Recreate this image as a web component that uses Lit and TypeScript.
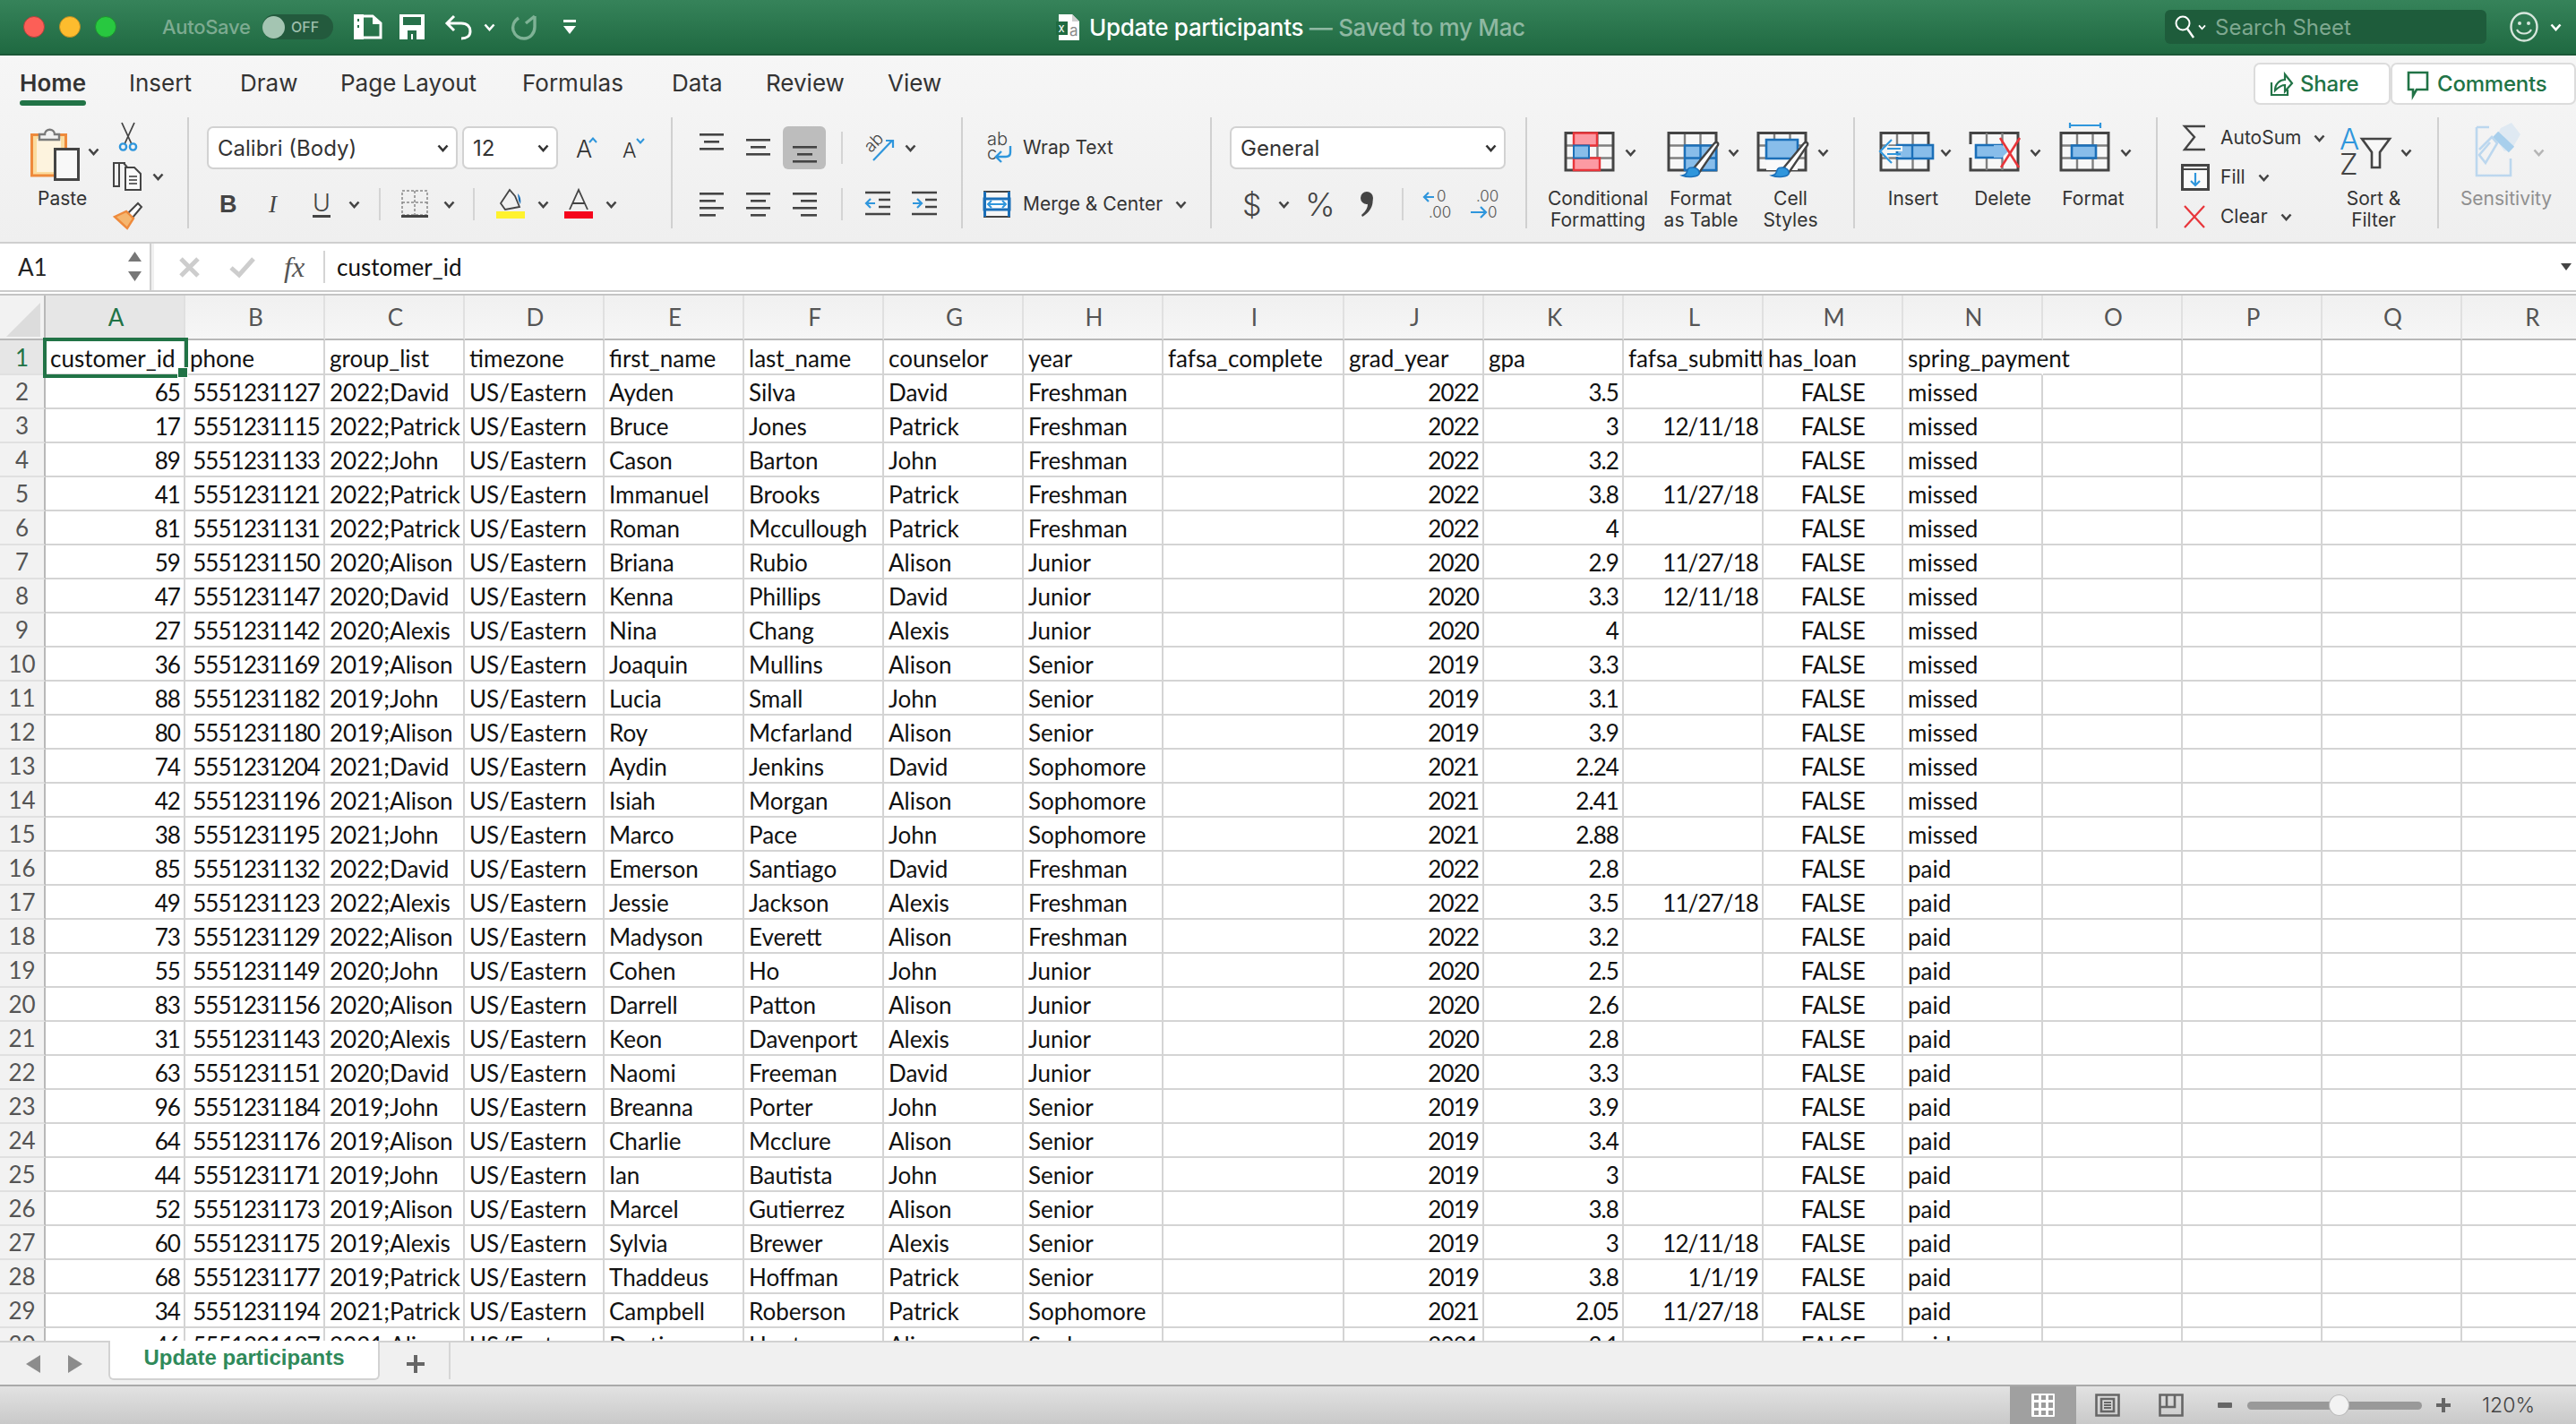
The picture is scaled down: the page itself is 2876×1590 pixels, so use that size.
import { LitElement, html, svg, css, nothing } from "lit";
import { customElement } from "lit/decorators.js";

const COLS = ["A", "B", "C", "D", "E", "F", "G", "H", "I", "J", "K", "L", "M", "N", "O", "P", "Q", "R"];
const HEAD = ["customer_id", "phone", "group_list", "timezone", "first_name", "last_name", "counselor", "year", "fafsa_complete", "grad_year", "gpa", "fafsa_submitted", "has_loan", "spring_payment"];

// id|phone suffix|group|first|last|counselor|year|grad|gpa|submitted|payment
const DATA = `65|1127|2022;David|Ayden|Silva|David|Freshman|2022|3.5||missed
17|1115|2022;Patrick|Bruce|Jones|Patrick|Freshman|2022|3|12/11/18|missed
89|1133|2022;John|Cason|Barton|John|Freshman|2022|3.2||missed
41|1121|2022;Patrick|Immanuel|Brooks|Patrick|Freshman|2022|3.8|11/27/18|missed
81|1131|2022;Patrick|Roman|Mccullough|Patrick|Freshman|2022|4||missed
59|1150|2020;Alison|Briana|Rubio|Alison|Junior|2020|2.9|11/27/18|missed
47|1147|2020;David|Kenna|Phillips|David|Junior|2020|3.3|12/11/18|missed
27|1142|2020;Alexis|Nina|Chang|Alexis|Junior|2020|4||missed
36|1169|2019;Alison|Joaquin|Mullins|Alison|Senior|2019|3.3||missed
88|1182|2019;John|Lucia|Small|John|Senior|2019|3.1||missed
80|1180|2019;Alison|Roy|Mcfarland|Alison|Senior|2019|3.9||missed
74|1204|2021;David|Aydin|Jenkins|David|Sophomore|2021|2.24||missed
42|1196|2021;Alison|Isiah|Morgan|Alison|Sophomore|2021|2.41||missed
38|1195|2021;John|Marco|Pace|John|Sophomore|2021|2.88||missed
85|1132|2022;David|Emerson|Santiago|David|Freshman|2022|2.8||paid
49|1123|2022;Alexis|Jessie|Jackson|Alexis|Freshman|2022|3.5|11/27/18|paid
73|1129|2022;Alison|Madyson|Everett|Alison|Freshman|2022|3.2||paid
55|1149|2020;John|Cohen|Ho|John|Junior|2020|2.5||paid
83|1156|2020;Alison|Darrell|Patton|Alison|Junior|2020|2.6||paid
31|1143|2020;Alexis|Keon|Davenport|Alexis|Junior|2020|2.8||paid
63|1151|2020;David|Naomi|Freeman|David|Junior|2020|3.3||paid
96|1184|2019;John|Breanna|Porter|John|Senior|2019|3.9||paid
64|1176|2019;Alison|Charlie|Mcclure|Alison|Senior|2019|3.4||paid
44|1171|2019;John|Ian|Bautista|John|Senior|2019|3||paid
52|1173|2019;Alison|Marcel|Gutierrez|Alison|Senior|2019|3.8||paid
60|1175|2019;Alexis|Sylvia|Brewer|Alexis|Senior|2019|3|12/11/18|paid
68|1177|2019;Patrick|Thaddeus|Hoffman|Patrick|Senior|2019|3.8|1/1/19|paid
34|1194|2021;Patrick|Campbell|Roberson|Patrick|Sophomore|2021|2.05|11/27/18|paid
46|1197|2021;Alison|Dustin|Hunt|Alison|Sophomore|2021|3.1||paid`
    .split("\n")
    .map((l) => l.split("|"));

const DARK = "#444";
const BLUE = "#1b6fb8";
const SKY = "#2f96dc";
const FILL = "#88bdea";
const RED = "#e8353a";

const chev = (color = DARK) => html`<svg class="chev" width="13" height="9" viewBox="0 0 13 9">
    <path d="M1.5 1.5 6.5 7 11.5 1.5" fill="none" stroke=${color} stroke-width="2.6" />
</svg>`;

const lines = (w: number, ys: number[], xs: number[][], color = DARK) => html`<svg width=${w} height="48" viewBox="0 0 ${w} 48">
    ${ys.map((y, i) => svg`<rect x=${xs[i][0]} y=${y} width=${xs[i][1]} height="2.6" fill=${color} />`)}
</svg>`;

// small sheet used by the big cell-style buttons
const sheetGrid = svg`
    <path d="M2 11.5H55V53H2Z" fill="#f7f7f7" />
    <path d="M2 25.5H55M2 39.5H55M20 11.5V53M37.5 11.5V53" stroke="#808080" stroke-width="2.4" fill="none" />
    <path d="M2 11.5H55V53H2Z" fill="none" stroke=${DARK} stroke-width="3" />
`;

const brush = svg`
    <path d="M29 52 53 23c2-2 5-1 4 2L36 56z" fill="#fff" stroke=${DARK} stroke-width="2.4" />
    <path d="M29 50c4 0 8 3 7 7-1 3-11 5-19 2 5-1 5-3 6-6s3-3 6-3z" fill=${SKY} stroke=${BLUE} stroke-width="1.6" />
`;

const tableIcon = (body: unknown) => html`<svg width="62" height="60" viewBox="0 0 62 60">${sheetGrid}${body}</svg>`;

@customElement("app-root")
export class AppRoot extends LitElement {
    private _titleBar() {
        return html`<div class="titlebar">
            <span class="light red"></span><span class="light amber"></span><span class="light green"></span>
            <span class="autosave">AutoSave</span>
            <span class="toggle"><i></i><b>OFF</b></span>
            <svg width="32" height="28" viewBox="0 0 32 28">
                <path d="M2 2H21L30 10V26H2Z" fill="none" stroke="#fff" stroke-width="3" />
                <path d="M0 0H11V28H0ZM21 2V11H30" fill="#fff" />
                <path d="M5 5V8M5 12V15" stroke="#2a7049" stroke-width="2" />
            </svg>
            <svg width="28" height="28" viewBox="0 0 28 28">
                <path d="M0 0H28V28H0Z" fill="#fff" />
                <path d="M4 3H24V12H4ZM9 28V18H19V28H15V22H13V28Z" fill="#27704a" />
            </svg>
            <svg width="32" height="28" viewBox="0 0 32 28">
                <path d="M11 2 3 10l8 8M3 10H19C26 10 29 14 29 19S25 27 19 27" fill="none" stroke="#fff" stroke-width="3" />
            </svg>
            ${chev("#fff")}
            <svg width="30" height="30" viewBox="0 0 30 30">
                <path d="M8 5C2 9 1 15 2 19c2 6 7 9 12 9 7 0 12-6 12-13V3M26 3 16 11" fill="none" stroke="#7fb296" stroke-width="3.4" />
            </svg>
            <svg width="14" height="16" viewBox="0 0 14 16">
                <rect y="0" width="14" height="3" fill="#fff" /><path d="M0 7H14L7 16Z" fill="#fff" />
            </svg>
            <svg width="27" height="29" viewBox="0 0 27 29">
                <path d="M3 0H18L26 8V29H3Z" fill="#fff" />
                <path d="M18 0V8H26" fill="#cfcfcf" />
                <rect x="0" y="8" width="13" height="15" fill="#1f6a41" />
                <text x="2.5" y="20" class="doc-x">x</text><text x="15" y="24" class="doc-a">a</text>
            </svg>
            <span class="doc-title">Update participants <span class="saved">— Saved to my Mac</span></span>
            <div class="search">
                <svg width="22" height="26" viewBox="0 0 22 26">
                    <circle cx="9" cy="9" r="7.5" fill="none" stroke="#fff" stroke-width="2" />
                    <path d="M14 15 21 25" stroke="#fff" stroke-width="2.4" />
                </svg>
                ${chev("#fff")}
                <span>Search Sheet</span>
            </div>
            <svg width="32" height="34" viewBox="0 0 32 34">
                <ellipse cx="16" cy="17" rx="14.5" ry="15.5" fill="none" stroke="#d6e6dc" stroke-width="2.4" />
                <circle cx="11" cy="13" r="2" fill="#d6e6dc" /><circle cx="21" cy="13" r="2" fill="#d6e6dc" />
                <path d="M8 20c3 6 13 6 16 0" fill="none" stroke="#d6e6dc" stroke-width="2.2" />
            </svg>
            ${chev("#fff")}
        </div>`;
    }

    private _tabs() {
        const tabs = ["Home", "Insert", "Draw", "Page Layout", "Formulas", "Data", "Review", "View"];
        return html`<div class="tabs">
            ${tabs.map((t, i) => html`<div class="tab ${i === 0 ? "on" : ""}">${t}</div>`)}
            <button class="action">
                <svg width="26" height="28" viewBox="0 0 26 28">
                    <path d="M2 12V26H20V20M6 21c0-8 6-12 11-12V3l8 10-8 9v-7c-4 0-7 2-11 6z" fill="none" stroke="#217346" stroke-width="2.2" />
                </svg>
                Share
            </button>
            <button class="action">
                <svg width="26" height="30" viewBox="0 0 26 30">
                    <path d="M2 2H23V21H11L7 28V21H2Z" fill="none" stroke="#217346" stroke-width="2.6" />
                </svg>
                Comments
            </button>
        </div>`;
    }

    private _clipboard() {
        return html`<div class="group g-clip">
            <div class="paste">
                <div class="paste-top">
                    <svg width="55" height="60" viewBox="0 0 55 60">
                        <path d="M1.5 8.5H39.500V54H1.500Z" fill="#fbdc9f" stroke="#ee8a3c" stroke-width="3" />
                        <path d="M7 13H34V50H7Z" fill="#fdf3de" />
                        <path d="M10 14V8H16C16 1 27 1 27 8H32V14Z" fill="#f2f2f2" stroke="#7a7a7a" stroke-width="2.4" />
                        <rect x="27.500" y="24.500" width="26" height="34" fill="#f8f8f8" stroke=${DARK} stroke-width="3" />
                    </svg>
                    ${chev()}
                </div>
                <div class="label">Paste</div>
            </div>
            <div class="clip-tools">
                <div class="tool-scissors">
                    <svg width="22" height="32" viewBox="0 0 22 32">
                        <path d="M4 0 15 24M18 0 7 24" stroke=${DARK} stroke-width="1.8" fill="none" />
                        <circle cx="5.500" cy="27" r="3.600" fill="none" stroke=${SKY} stroke-width="2.4" />
                        <circle cx="16.500" cy="27" r="3.600" fill="none" stroke=${SKY} stroke-width="2.4" />
                    </svg>
                </div>
                <div class="tool-copy">
                    <svg width="32" height="32" viewBox="0 0 32 32">
                        <path d="M14 1H7V27H1V1H12L18 8" fill="none" stroke=${DARK} stroke-width="2" />
                        <path d="M14 6H24L31 13V31H14Z" fill="#fafafa" stroke=${DARK} stroke-width="2" />
                        <path d="M18 16H27M18 20H27M18 24H27" stroke="#666" stroke-width="1.800" />
                    </svg>
                    ${chev()}
                </div>
                <div class="tool-brush">
                    <svg width="32" height="30" viewBox="0 0 32 30">
                        <path d="M16 12 27 1l4 4-10 12z" fill="#fff" stroke=${DARK} stroke-width="2" />
                        <path d="M1 16 14 10 22 18 15 29Z" fill="#f5b66f" stroke="#ee8a3c" stroke-width="2.4" />
                    </svg>
                </div>
            </div>
        </div>`;
    }

    private _font() {
        return html`<div class="group g-font stack">
            <div class="row r-font1">
                <div class="select sel-font"><span>Calibri (Body)</span>${chev("#333")}</div>
                <div class="select sel-size"><span>12</span>${chev("#333")}</div>
                <svg width="26" height="24" viewBox="0 0 26 24">
                    <text x="0" y="23" class="ribbon-a">A</text>
                    <path d="M15 6 19 1.500 23 6" fill="none" stroke=${SKY} stroke-width="2" />
                </svg>
                <svg width="26" height="24" viewBox="0 0 26 24">
                    <text x="0" y="23" class="ribbon-a small">A</text>
                    <path d="M16 2 20 6.500 24 2" fill="none" stroke=${SKY} stroke-width="2" />
                </svg>
            </div>
            <div class="row r-font2">
                <span class="b">B</span>
                <span class="i">I</span>
                <span class="u">U</span>
                ${chev()}
                <span class="vsep"></span>
                <svg width="30" height="32" viewBox="0 0 30 32">
                    <path d="M1 1H29V28H1ZM15 1V28M1 14H29" fill="none" stroke="#888" stroke-width="1.500" stroke-dasharray="3 2" />
                    <rect x="0" y="28" width="30" height="3" fill=${DARK} />
                </svg>
                ${chev()}
                <span class="vsep"></span>
                <svg width="32" height="34" viewBox="0 0 32 34">
                    <path d="M5 16 15 1 21 8 26 20 10 23Z" fill="none" stroke="#444" stroke-width="1.800" />
                    <path d="M24 5c3 3 4 7 3 12l-2-4z" fill=${BLUE} />
                    <rect x="0" y="25" width="32" height="8" fill="#fff22e" />
                </svg>
                ${chev()}
                <svg width="32" height="34" viewBox="0 0 32 34">
                    <path d="M6 23 16 1 26 23M9 16H23" fill="none" stroke="#444" stroke-width="1.800" />
                    <rect x="0" y="25" width="32" height="8" fill="#f5051c" />
                </svg>
                ${chev()}
            </div>
        </div>`;
    }

    private _align() {
        const x3 = [[0, 27], [5, 17], [0, 27]];
        return html`<div class="group g-align stack">
            <div class="row r-align1">
                ${lines(27, [8, 16, 24], x3)}
                ${lines(27, [14, 22, 30], x3)}
                <div class="pressed">${lines(27, [22, 30, 38], x3)}</div>
                <span class="vsep"></span>
                <svg width="34" height="32" viewBox="0 0 34 32">
                    <text x="0" y="17" class="orient">ab</text>
                    <path d="M10 30 31 8M24 8H32V16" fill="none" stroke=${SKY} stroke-width="2.200" />
                </svg>
                ${chev()}
            </div>
            <div class="row r-align2">
                ${lines(27, [11, 19, 27, 35], [[0, 27], [0, 18], [0, 27], [0, 18]])}
                ${lines(27, [11, 19, 27, 35], [[0, 27], [5, 17], [0, 27], [5, 17]])}
                ${lines(27, [11, 19, 27, 35], [[0, 27], [9, 18], [0, 27], [9, 18]])}
                <span class="vsep"></span>
                <svg width="28" height="48" viewBox="0 0 28 48">
                    <path d="M0 11H28M15 19H28M15 27H28M0 35H28" stroke=${DARK} stroke-width="2.600" />
                    <path d="M11 23H1M6 18 1 23l5 5" fill="none" stroke=${SKY} stroke-width="2.200" />
                </svg>
                <svg width="28" height="48" viewBox="0 0 28 48">
                    <path d="M0 11H28M15 19H28M15 27H28M0 35H28" stroke=${DARK} stroke-width="2.600" />
                    <path d="M1 23H11M6 18l5 5-5 5" fill="none" stroke=${SKY} stroke-width="2.200" />
                </svg>
            </div>
        </div>`;
    }

    private _wrap() {
        return html`<div class="group g-wrap stack">
            <div class="row r-wrap1">
                <svg width="30" height="32" viewBox="0 0 30 32">
                    <text x="0" y="13" class="wrap-t">ab</text><text x="0" y="29" class="wrap-t">c</text>
                    <path d="M26 14V21c0 3-2 5-5 5H11M16 20l-6 6 6 6" fill="none" stroke=${SKY} stroke-width="2.400" />
                </svg>
                <span class="label">Wrap Text</span>
            </div>
            <div class="row r-wrap2">
                <svg width="30" height="30" viewBox="0 0 30 30">
                    <path d="M1 1H29V29H1ZM1 9H29M1 21H29" fill="#f7f7f7" stroke=${DARK} stroke-width="2" />
                    <path d="M1 9H29V21H1Z" fill="#fff" stroke=${BLUE} stroke-width="3" />
                    <path d="M1.500 1V29M28.500 1V29" stroke=${BLUE} stroke-width="3" />
                    <path d="M5 15H25M9 11 5 15l4 4M21 11l4 4-4 4" fill="none" stroke=${SKY} stroke-width="2" />
                </svg>
                <span class="label">Merge &amp; Center</span>
                ${chev()}
            </div>
        </div>`;
    }

    private _number() {
        return html`<div class="group g-num stack">
            <div class="row r-num1">
                <div class="select sel-num"><span>General</span>${chev("#333")}</div>
            </div>
            <div class="row r-num2">
                <span class="sym dollar">$</span>
                ${chev()}
                <span class="sym pct">%</span>
                <svg width="18" height="28" viewBox="0 0 18 28">
                    <circle cx="9" cy="7" r="7" fill=${DARK} />
                    <path d="M11 3C18 5 18 20 4 28L3 26C10 20 11 14 9 12Z" fill=${DARK} />
                </svg>
                <span class="vsep"></span>
                <svg width="32" height="32" viewBox="0 0 32 32">
                    <text x="15" y="13" class="dec">0</text><text x="6" y="31" class="dec">.00</text>
                    <path d="M12 8H1M6 3 1 8l5 5" fill="none" stroke=${SKY} stroke-width="2.200" />
                </svg>
                <svg width="32" height="32" viewBox="0 0 32 32">
                    <text x="6" y="13" class="dec">.00</text><text x="19" y="31" class="dec">0</text>
                    <path d="M0 25H16M11 19l6 6-6 6" fill="none" stroke=${SKY} stroke-width="2.200" />
                </svg>
            </div>
        </div>`;
    }

    private _big(icon: unknown, l1: string, l2?: string, muted = false) {
        return html`<div class="big ${muted ? "muted" : ""}">
            <div class="big-top">${icon}${chev(muted ? "#b5b5b5" : DARK)}</div>
            <div class="label">${l1}${l2 ? html`<br />${l2}` : nothing}</div>
        </div>`;
    }

    private _styles() {
        const cond = tableIcon(svg`
            <path d="M11 11.500H37V25.500H11ZM11 39.500H40V53H11Z" fill="#fc9aa3" stroke=${RED} stroke-width="2.400" />
            <rect x="11" y="25.500" width="17" height="14" fill=${FILL} stroke=${BLUE} stroke-width="2" />
        `);
        const asTable = tableIcon(svg`
            <path d="M20 25.500H55V53H20Z" fill=${FILL} stroke=${BLUE} stroke-width="2.400" />
            <path d="M37.500 25.500V53M20 39.500H55" stroke=${BLUE} stroke-width="2.400" />
            ${brush}
        `);
        const cell = tableIcon(svg`
            <rect x="11" y="19" width="35" height="34" fill="#fafafa" />
            <path d="M11 19H46V40H11Z" fill=${FILL} stroke=${BLUE} stroke-width="2.600" />
            ${brush}
        `);
        return html`<div class="group g-styles big-row">
            ${this._big(cond, "Conditional", "Formatting")}
            ${this._big(asTable, "Format", "as Table")}
            ${this._big(cell, "Cell", "Styles")}
        </div>`;
    }

    private _cells() {
        const insert = tableIcon(svg`
            <path d="M20 25H60V40H20Z" fill=${FILL} stroke=${BLUE} stroke-width="2.600" />
            <path d="M37 25V40" stroke=${BLUE} stroke-width="2.400" />
            <path d="M2 32H26V26H10L14 18 0 32 14 46 10 38H26Z" fill="#f4f4f4" />
            <path d="M24 29H9M24 35H9M14 19 1 32l13 13" fill="none" stroke=${SKY} stroke-width="2.200" />
        `);
        const del = html`<svg width="62" height="60" viewBox="0 0 62 60">
            <path d="M2 24V11.500H55V53H2V39" fill="#f7f7f7" stroke=${DARK} stroke-width="3" />
            <path d="M20 11.500V24M37.500 11.500V24M20 40V53M37.500 40V53" stroke="#808080" stroke-width="2.400" />
            <path d="M8 25H37V39H8Z" fill=${FILL} stroke=${BLUE} stroke-width="2.600" />
            <path d="M28 25H37L44 32 37 39H28Z" fill=${FILL} />
            <path d="M35 17 56 50M57 17 36 50" stroke=${RED} stroke-width="2.600" />
        </svg>`;
        const fmt = tableIcon(svg`
            <path d="M13 0V6M47 0V6M13 3H47" fill="none" stroke=${SKY} stroke-width="2.200" transform="translate(-1,0)" />
            <rect x="14" y="25.500" width="27" height="14" fill=${FILL} stroke=${BLUE} stroke-width="2.600" />
        `);
        return html`<div class="group g-cells big-row">
            ${this._big(insert, "Insert")}
            ${this._big(del, "Delete")}
            ${this._big(fmt, "Format")}
        </div>`;
    }

    private _editing() {
        return html`<div class="group g-edit">
            <div class="edit-list">
                <div class="edit-row">
                    <svg width="30" height="30" viewBox="0 0 30 30">
                        <path d="M27 2H4L15 14 4 28H27" fill="none" stroke=${DARK} stroke-width="2.400" />
                    </svg>
                    <span class="label">AutoSum</span>${chev()}
                </div>
                <div class="edit-row">
                    <svg width="32" height="30" viewBox="0 0 32 30">
                        <rect x="1.500" y="1.500" width="29" height="27" fill="#fafafa" stroke=${DARK} stroke-width="3" />
                        <path d="M1.500 6H30" stroke=${DARK} stroke-width="2" />
                        <path d="M16 10V24M11 19l5 5 5-5" fill="none" stroke=${SKY} stroke-width="2.200" />
                    </svg>
                    <span class="label">Fill</span>${chev()}
                </div>
                <div class="edit-row">
                    <svg width="30" height="26" viewBox="0 0 30 26">
                        <path d="M4 1 26 25M26 1 4 25" stroke=${RED} stroke-width="2.200" />
                    </svg>
                    <span class="label">Clear</span>${chev()}
                </div>
            </div>
            ${this._big(
                html`<svg width="62" height="60" viewBox="0 0 62 60">
                    <text x="0" y="30" class="sort-a">A</text>
                    <text x="0" y="58" class="sort-z">Z</text>
                    <path d="M25 18H56L45 33V50H36V33Z" fill="#f8f8f8" stroke=${DARK} stroke-width="2.600" />
                </svg>`,
                "Sort &",
                "Filter",
            )}
        </div>`;
    }

    private _sensitivity() {
        const ic = html`<svg width="62" height="60" viewBox="0 0 62 60">
            <path d="M5 5H19M5 5V59H43V40" fill="none" stroke="#bcd7ee" stroke-width="2.600" />
            <path d="M32 6 44 0 54 13 44 30 36 32 26 17Z" fill="#dfe9f2" />
            <path d="M26 13 44 30" stroke="#a8cfec" stroke-width="9" />
            <path d="M8 30 22 16 28 23 15 45 8 36 20 22" fill="none" stroke="#bcd7ee" stroke-width="2.600" />
        </svg>`;
        return html`<div class="group g-sens big-row">${this._big(ic, "Sensitivity", undefined, true)}</div>`;
    }

    private _formula() {
        return html`<div class="formula">
            <div class="namebox">
                <span>A1</span>
                <svg width="15" height="34" viewBox="0 0 15 34">
                    <path d="M7.500 0 15 11H0ZM0 22H15L7.500 33Z" fill="#777" />
                </svg>
            </div>
            <div class="fbar">
                <svg width="23" height="23" viewBox="0 0 23 23">
                    <path d="M2 2 21 21M21 2 2 21" stroke="#cdcdcd" stroke-width="5" />
                </svg>
                <svg width="29" height="23" viewBox="0 0 29 23">
                    <path d="M2 12 11 20 27 2" fill="none" stroke="#cdcdcd" stroke-width="5" />
                </svg>
                <span class="fx">fx</span>
                <span class="vsep"></span>
                <span class="ftext">customer_id</span>
                <svg class="fdrop" width="12" height="8" viewBox="0 0 12 8"><path d="M0 0H12L6 8Z" fill="#444" /></svg>
            </div>
        </div>`;
    }

    private _sheet() {
        const cell = (text: string, cls = "") => html`<div class="cell ${cls}">${text}</div>`;
        const blanks = (n: number) => Array.from({ length: n }, () => cell(""));
        return html`<div class="sheet">
            <div class="corner"><svg width="40" height="40" viewBox="0 0 40 40"><path d="M38 0V38H0Z" fill="#dcdcdc" /></svg></div>
            ${COLS.map((c, i) => html`<div class="colhead ${i === 0 ? "sel" : ""}">${c}</div>`)}
            <div class="rowhead sel">1</div>
            <div class="cell active first">${HEAD[0]}<span class="handle"></span></div>
            ${HEAD.slice(1).map((h) => cell(h, h === "spring_payment" ? "first over" : "first"))}
            ${blanks(4)}
            ${DATA.map(
                (r, i) => html`
                    <div class="rowhead">${i + 2}</div>
                    ${cell(r[0], "num")}
                    ${cell("555123" + r[1], "num")}
                    ${cell(r[2])}
                    ${cell("US/Eastern")}
                    ${cell(r[3])}
                    ${cell(r[4])}
                    ${cell(r[5])}
                    ${cell(r[6])}
                    ${cell("")}
                    ${cell(r[7], "num")}
                    ${cell(r[8], "num")}
                    ${cell(r[9], "num")}
                    ${cell("FALSE", "ctr")}
                    ${cell(r[10])}
                    ${blanks(4)}
                `,
            )}
        </div>`;
    }

    private _bottom() {
        return html`<div class="sheetbar">
            <svg width="16" height="20" viewBox="0 0 16 20"><path d="M16 0V20L0 10Z" fill="#8c8c8c" /></svg>
            <svg width="16" height="20" viewBox="0 0 16 20"><path d="M0 0V20L16 10Z" fill="#8c8c8c" /></svg>
            <div class="sheettab">Update participants</div>
            <svg width="20" height="20" viewBox="0 0 20 20"><path d="M10 0V20M0 10H20" stroke="#666" stroke-width="4" /></svg>
            <span class="tabsep"></span>
        </div>
        <div class="status">
            <div class="view on">
                <svg width="26" height="26" viewBox="0 0 26 26">
                    <rect width="26" height="26" rx="1" fill="#fff" />
                    <path d="M3 2H8V7H3ZM11 2H16V7H11ZM19 2H24V7H19ZM3 10H8V16H3ZM11 10H16V16H11ZM19 10H24V16H19ZM3 19H8V24H3ZM11 19H16V24H11ZM19 19H24V24H19Z" fill="#9b9b9b" />
                </svg>
            </div>
            <svg width="28" height="26" viewBox="0 0 28 26">
                <path d="M1.500 1.500H26.500V24.500H1.500ZM7 6H21V20H7Z" fill="none" stroke="#666" stroke-width="2.600" />
                <path d="M10 10H18M10 13H18M10 16H18" stroke="#666" stroke-width="2" />
            </svg>
            <svg width="28" height="26" viewBox="0 0 28 26">
                <path d="M1.500 1.500H26.500V24.500H1.500ZM1.500 15H18V1.500M9 1.500V15" fill="none" stroke="#666" stroke-width="2.600" />
            </svg>
            <span class="zoom-minus"></span>
            <div class="slider"><span class="knob"></span></div>
            <svg width="16" height="16" viewBox="0 0 16 16"><path d="M8 0V16M0 8H16" stroke="#666" stroke-width="4" /></svg>
            <span class="pct-text">120%</span>
        </div>`;
    }

    render() {
        return html`
            ${this._titleBar()}
            <div class="chrome">
                ${this._tabs()}
                <div class="ribbon">
                    ${this._clipboard()} ${this._font()} ${this._align()} ${this._wrap()} ${this._number()}
                    ${this._styles()} ${this._cells()} ${this._editing()} ${this._sensitivity()}
                </div>
            </div>
            ${this._formula()} ${this._sheet()} ${this._bottom()}
        `;
    }

    static styles = css`
        :host {
            display: block;
            width: 2876px;
            height: 1590px;
            overflow: hidden;
            background: #fff;
            font-family: Inter, "Noto Sans", sans-serif;
            color: #333;
        }
        svg {
            display: block;
            overflow: visible;
        }
        .chev {
            flex: none;
        }

        /* title bar: tracks are start-to-start distances */
        .titlebar {
            box-sizing: border-box;
            height: 62px;
            padding-left: 26px;
            display: grid;
            grid-template-columns: 40px 40px 75px 112px 102px 51px 50px 44px 31px 58px 550px 37px 1201px 385px 45px auto;
            align-items: center;
            background: linear-gradient(#36835a, #1f6941);
            border-bottom: 2px solid #1b5737;
        }
        .light {
            width: 24px;
            height: 24px;
            border-radius: 50%;
            box-sizing: border-box;
        }
        .light.red {
            background: #fc5f57;
            border: 1px solid #b0413c;
        }
        .light.amber {
            background: #fdbc2e;
            border: 1px solid #b98a22;
        }
        .light.green {
            background: #28c840;
            border: 1px solid #1f8f30;
        }
        .autosave {
            font-size: 22px;
            color: #7dab91;
            font-weight: 500;
            letter-spacing: -0.3px;
        }
        .toggle {
            width: 79px;
            height: 28px;
            border-radius: 14px;
            background: #235a3d;
            display: flex;
            align-items: center;
            gap: 7px;
            box-sizing: border-box;
        }
        .toggle i {
            width: 25px;
            height: 25px;
            border-radius: 50%;
            background: #a4c5b2;
            flex: none;
        }
        .toggle b {
            font-size: 16px;
            font-weight: 500;
            color: #9dbfac;
        }
        .doc-x {
            font: 13px Inter, sans-serif;
            fill: #fff;
        }
        .doc-a {
            font: 17px Inter, sans-serif;
            fill: #8a8a8a;
        }
        .doc-title {
            font-size: 26px;
            font-weight: 500;
            color: #fff;
            white-space: nowrap;
            letter-spacing: -0.3px;
        }
        .saved {
            color: #8fb8a2;
        }
        .search {
            width: 359px;
            height: 38px;
            box-sizing: border-box;
            padding-left: 11px;
            border-radius: 6px;
            background: #1e5c3b;
            display: flex;
            align-items: center;
            gap: 4px;
            color: #7fa890;
            font-size: 24px;
        }
        .search .chev {
            width: 9px;
        }
        .search span {
            margin-left: 6px;
        }

        .chrome {
            height: 208px;
            background: linear-gradient(#f6f6f6, #efefef);
            border-bottom: 2px solid #cfcfcf;
        }

        .tabs {
            height: 56px;
            padding-left: 22px;
            display: grid;
            grid-template-columns: 122px 124px 112px 203px 167px 105px 136px 1525px 153px auto;
            align-items: start;
        }
        .tab {
            width: max-content;
            padding-top: 12px;
            font-size: 26px;
            line-height: 38px;
            color: #333;
        }
        .tab.on {
            font-weight: 600;
            height: 44px;
        }
        .tab.on::after {
            content: "";
            display: block;
            height: 6px;
            border-radius: 3px;
            background: #217346;
        }
        .action {
            margin-top: 8px;
            height: 47px;
            padding: 0 10px 0 16px;
            display: flex;
            align-items: center;
            gap: 8px;
            background: #fff;
            border: 2px solid #dcdcdc;
            border-radius: 7px;
            color: #217346;
            font: 500 24px Inter, sans-serif;
            letter-spacing: -0.2px;
        }

        .ribbon {
            padding-top: 13px;
            display: grid;
            grid-template-columns: 209px 540px 324px 278px 352px 366px 338px 314px 155px;
        }
        .group {
            height: 124px;
            box-sizing: border-box;
        }
        .group + .group {
            box-shadow: inset 2px 0 #d0d0d0;
        }
        .stack {
            padding-top: 10px;
            display: grid;
            grid-template-rows: 48px 48px;
            row-gap: 15px;
        }
        .row {
            display: grid;
            align-items: center;
            justify-items: start;
        }
        .label {
            font-size: 21px;
            line-height: 24px;
            color: #333;
            white-space: nowrap;
        }
        .vsep {
            width: 2px;
            height: 36px;
            background: #d4d4d4;
        }
        .select {
            height: 48px;
            box-sizing: border-box;
            background: #fff;
            border: 2px solid #d2d2d2;
            border-radius: 7px;
            display: flex;
            align-items: center;
            justify-content: space-between;
            padding: 0 8px 0 10px;
            font-size: 24px;
            color: #333;
        }
        .sel-font {
            width: 280px;
        }
        .sel-size {
            width: 107px;
        }
        .sel-num {
            width: 308px;
        }
        .ribbon-a {
            font: 300 27px Inter, sans-serif;
            fill: #333;
        }
        .ribbon-a.small {
            font-size: 23px;
        }

        .g-clip {
            display: grid;
            grid-template-columns: 126px auto;
            padding-left: 0;
        }
        .paste {
            padding: 11px 0 0 34px;
        }
        .paste-top {
            height: 68px;
            display: flex;
            align-items: flex-start;
            gap: 9px;
        }
        .paste-top .chev {
            margin-top: 23px;
        }
        .paste .label {
            margin-left: 8px;
        }
        .clip-tools {
            display: grid;
            grid-template-rows: 44px 44px 44px;
            align-items: center;
        }
        .tool-scissors {
            padding-left: 6px;
        }
        .tool-copy {
            display: flex;
            align-items: center;
            gap: 12px;
        }
        .tool-brush {
            padding-left: 1px;
        }

        .r-font1 {
            padding-left: 22px;
            grid-template-columns: 285px 127px 52px auto;
        }
        .r-font2 {
            padding-left: 36px;
            grid-template-columns: 55px 49px 40px 34px 25px 47px 33px 26px 46px 30px 46px auto;
        }
        .b {
            font: 700 27px "Liberation Sans", sans-serif;
            color: #444;
        }
        .i {
            font: italic 400 27px "Liberation Serif", serif;
            color: #444;
        }
        .u {
            font: 300 27px Inter, sans-serif;
            color: #444;
            border-bottom: 3px solid #444;
            line-height: 27px;
        }

        .r-align1 {
            padding-left: 32px;
            grid-template-columns: 52px 41px 65px 26px 45px auto;
        }
        .r-align2 {
            padding-left: 32px;
            grid-template-columns: 52px 52px 54px 27px 52px auto;
        }
        .pressed {
            width: 48px;
            height: 48px;
            border-radius: 6px;
            background: #bdbdbd;
            display: flex;
            justify-content: center;
        }
        .orient {
            font: 300 19px Inter, sans-serif;
            fill: #444;
            transform: rotate(-45deg);
            transform-origin: 10px 11px;
        }

        .r-wrap1 {
            padding-left: 29px;
            grid-template-columns: 40px auto;
        }
        .r-wrap2 {
            padding-left: 25px;
            grid-template-columns: 44px 170px auto;
        }
        .wrap-t {
            font: 300 20px Inter, sans-serif;
            fill: #444;
        }

        .r-num1 {
            padding-left: 22px;
        }
        .r-num2 {
            padding-left: 36px;
            grid-template-columns: 40px 30px 60px 48px 24px 53px auto;
        }
        .sym {
            font-weight: 300;
            color: #444;
        }
        .dollar {
            font-size: 34px;
        }
        .pct {
            font-size: 36px;
        }
        .dec {
            font: 300 17px Inter, sans-serif;
            fill: #555;
        }

        .big-row {
            padding-top: 6px;
            display: grid;
            justify-items: start;
        }
        .big {
            width: 116px;
        }
        .big-top {
            height: 73px;
            box-sizing: border-box;
            padding-left: 20px;
            display: flex;
            align-items: flex-start;
            gap: 6px;
        }
        .big-top .chev {
            margin-top: 29px;
        }
        .big .label {
            text-align: center;
        }
        .muted .label {
            color: #8f8f8f;
        }
        .g-styles {
            padding-left: 23px;
            grid-template-columns: 115px 100px auto;
        }
        .g-cells {
            padding-left: 9px;
            grid-template-columns: 100px 101px auto;
        }
        .g-sens {
            padding-left: 19px;
        }

        .g-edit {
            display: grid;
            grid-template-columns: 185px auto;
        }
        .g-edit .big {
            padding-top: 6px;
        }
        .edit-list {
            padding: 1px 0 0 28px;
            display: grid;
            grid-template-rows: 44px 44px 44px;
        }
        .edit-row {
            display: grid;
            grid-template-columns: 44px max-content auto;
            align-items: center;
            justify-items: start;
        }
        .edit-row .chev {
            margin-left: 14px;
        }
        .sort-a {
            font: 300 33px Inter, sans-serif;
            fill: #2f96dc;
        }
        .sort-z {
            font: 300 33px Inter, sans-serif;
            fill: #444;
        }

        /* formula bar */
        .formula {
            height: 52px;
            display: grid;
            grid-template-columns: 169px auto;
            column-gap: 3px;
            background: #f0f0f0;
            border-bottom: 2px solid #cccccc;
        }
        .namebox {
            background: #fff;
            padding: 0 9px 0 20px;
            display: flex;
            align-items: center;
            justify-content: space-between;
            font: 26px Lato, sans-serif;
            color: #222;
            border-right: 2px solid #cfcfcf;
        }
        .fbar {
            background: #fff;
            padding-left: 28px;
            display: grid;
            grid-template-columns: 56px 61px 44px 15px 1fr auto;
            align-items: center;
            justify-items: start;
            padding-right: 5px;
        }
        .fx {
            font: italic 32px "Liberation Serif", serif;
            color: #555;
        }
        .ftext {
            font: 26px Lato, sans-serif;
            color: #111;
        }

        /* sheet */
        .sheet {
            height: 1169px;
            overflow: hidden;
            box-sizing: border-box;
            border-top: 2px solid #c4c4c4;
            margin-top: 2px;
            display: grid;
            grid-template-columns: 51px repeat(8, 156px) 202px repeat(9, 156px);
            grid-template-rows: 50px 39px;
            grid-auto-rows: 38px;
            font: 26px Lato, sans-serif;
            color: #111;
        }
        .corner {
            background: #f2f2f2;
            border-right: 2px solid #b8b8b8;
            border-bottom: 2px solid #b8b8b8;
            padding: 8px 0 0 7px;
            box-sizing: border-box;
        }
        .colhead {
            display: flex;
            align-items: center;
            justify-content: center;
            padding-left: 3px;
            background: linear-gradient(#f0f0f0, #f6f6f6);
            border-right: 2px solid #e0e0e0;
            border-bottom: 2px solid #b8b8b8;
            color: #555;
            box-sizing: border-box;
        }
        .colhead.sel {
            background: #e6e6e6;
            color: #217346;
        }
        .rowhead {
            display: flex;
            align-items: center;
            justify-content: center;
            background: #f2f2f2;
            border-right: 2px solid #b8b8b8;
            border-bottom: 2px solid #e0e0e0;
            color: #555;
            box-sizing: border-box;
        }
        .rowhead.sel {
            background: #e6e6e6;
            color: #217346;
        }
        .cell {
            box-sizing: border-box;
            border-right: 2px solid #d4d4d4;
            border-bottom: 2px solid #d4d4d4;
            padding: 0 4px 0 5px;
            line-height: 38px;
            white-space: nowrap;
            overflow: hidden;
        }
        .cell.first {
            line-height: 40px;
        }
        .cell.num {
            text-align: right;
            letter-spacing: -0.9px;
        }
        .cell.ctr {
            text-align: center;
            letter-spacing: -0.3px;
        }
        .cell.over {
            overflow: visible;
            border-right-color: transparent;
        }
        .cell.active {
            position: relative;
            overflow: visible;
            outline: 4px solid #217346;
            outline-offset: -1px;
            z-index: 1;
        }
        .handle {
            position: absolute;
            right: -5px;
            bottom: -5px;
            width: 10px;
            height: 10px;
            background: #217346;
            border: 1px solid #fff;
        }

        /* sheet tabs */
        .sheetbar {
            height: 51px;
            box-sizing: border-box;
            border-top: 2px solid #d2d2d2;
            border-bottom: 2px solid #a9a9a9;
            padding-left: 29px;
            background: #f0f0f0;
            display: grid;
            grid-template-columns: 47px 45px 333px 47px auto;
            align-items: center;
            justify-items: start;
        }
        .sheetbar .sheettab {
            align-self: start;
            width: 303px;
            height: 44px;
            box-sizing: border-box;
            margin-top: -2px;
            text-align: center;
            font: 700 24px/38px "Liberation Sans", sans-serif;
            color: #2f8a5a;
            background: #fff;
            border-radius: 0 0 6px 6px;
            border: 2px solid #d2d2d2;
            border-top: 0;
        }
        .tabsep {
            width: 2px;
            height: 41px;
            align-self: start;
            background: #d6d6d6;
        }

        /* status bar */
        .status {
            height: 42px;
            padding-left: 2244px;
            background: linear-gradient(#e2e2e2, #c9c9c9);
            display: grid;
            grid-template-columns: 95px 71px 66px 33px 211px 51px auto;
            align-items: center;
            justify-items: start;
        }
        .view {
            width: 74px;
            height: 42px;
            background: #a0a0a0;
            display: flex;
            align-items: center;
            justify-content: center;
        }
        .zoom-minus {
            width: 16px;
            height: 6px;
            background: #666;
            border-radius: 1px;
        }
        .slider {
            width: 195px;
            height: 9px;
            border-radius: 5px;
            background: #999;
            display: flex;
            align-items: center;
            padding-left: 91px;
            box-sizing: border-box;
        }
        .knob {
            width: 23px;
            height: 24px;
            border-radius: 50%;
            background: #f2f2f2;
            border: 1px solid #bbb;
            box-sizing: border-box;
            flex: none;
        }
        .pct-text {
            font-size: 23px;
            font-weight: 300;
            color: #444;
        }
    `;
}
